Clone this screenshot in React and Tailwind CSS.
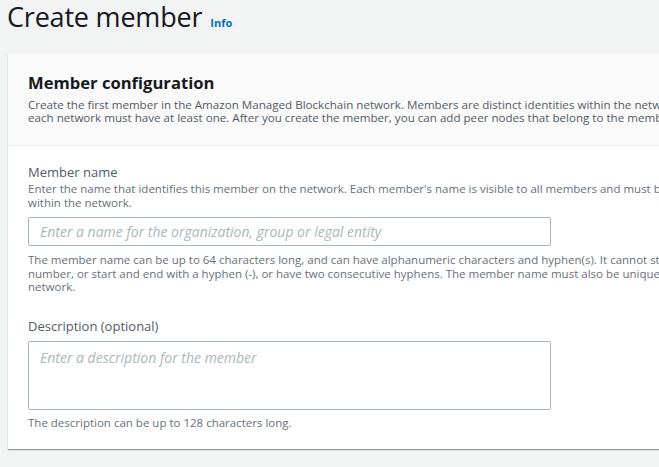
import React from "react";

export default function App() {
  return (
    <div className="w-[659px] h-[467px] overflow-hidden bg-[#f2f3f3] text-[#16191f] font-['Open_Sans',sans-serif]">
      {/* Page title */}
      <div className="flex items-baseline pl-[7px] h-[54px]">
        <h1 className="text-[27px] leading-[34px] tracking-[-0.2px] text-[#16191f]">Create member</h1>
        <span className="ml-[8px] text-[11px] font-bold text-[#0073bb]">Info</span>
      </div>

      {/* Card */}
      <div className="ml-[8px] w-[700px] bg-white shadow-[0_1px_1px_0_rgba(0,28,36,0.3),1px_1px_1px_0_rgba(0,28,36,0.15)]">
        <div className="bg-[#fafafa] border-b border-[#eaeded] px-[20px] pt-[18px] h-[92px]">
          <h2 className="text-[16.6px] font-bold leading-[22px]">Member configuration</h2>
          <p className="mt-[4px] text-[11.6px] leading-[13px] text-[#545b64] whitespace-nowrap">
            Create the first member in the Amazon Managed Blockchain network. Members are distinct identities within the network, and
            <br />
            each network must have at least one. After you create the member, you can add peer nodes that belong to the member.
          </p>
        </div>

        <div className="px-[20px] pt-[16px] pb-[20px]">
          <div className="text-[13px] leading-[20px] text-[#545b64]">Member name</div>
          <p className="text-[11.5px] leading-[13.5px] text-[#687078] whitespace-nowrap">
            Enter the name that identifies this member on the network. Each member's name is visible to all members and must be unique
            <br />
            within the network.
          </p>
          <div className="mt-[8px] w-[523px] h-[29px] border border-[#aab7b8] rounded-[2px] flex items-center px-[11px]">
            <span className="italic text-[14px] text-[#aab7b8]">Enter a name for the organization, group or legal entity</span>
          </div>
          <p className="mt-[7px] text-[11.5px] leading-[13.5px] text-[#687078] whitespace-nowrap">
            The member name can be up to 64 characters long, and can have alphanumeric characters and hyphen(s). It cannot start with a
            <br />
            number, or start and end with a hyphen (-), or have two consecutive hyphens. The member name must also be unique across the
            <br />
            network.
          </p>

          <div className="mt-[22px] text-[13px] leading-[20px] text-[#545b64]">Description (optional)</div>
          <div className="mt-[5px] w-[523px] h-[69px] border border-[#aab7b8] rounded-[2px] px-[11px] pt-[3px]">
            <span className="italic text-[14px] text-[#aab7b8]">Enter a description for the member</span>
          </div>
          <p className="mt-[6px] text-[11.5px] leading-[13.5px] text-[#687078]">
            The description can be up to 128 characters long.
          </p>
        </div>
      </div>
    </div>
  );
}
